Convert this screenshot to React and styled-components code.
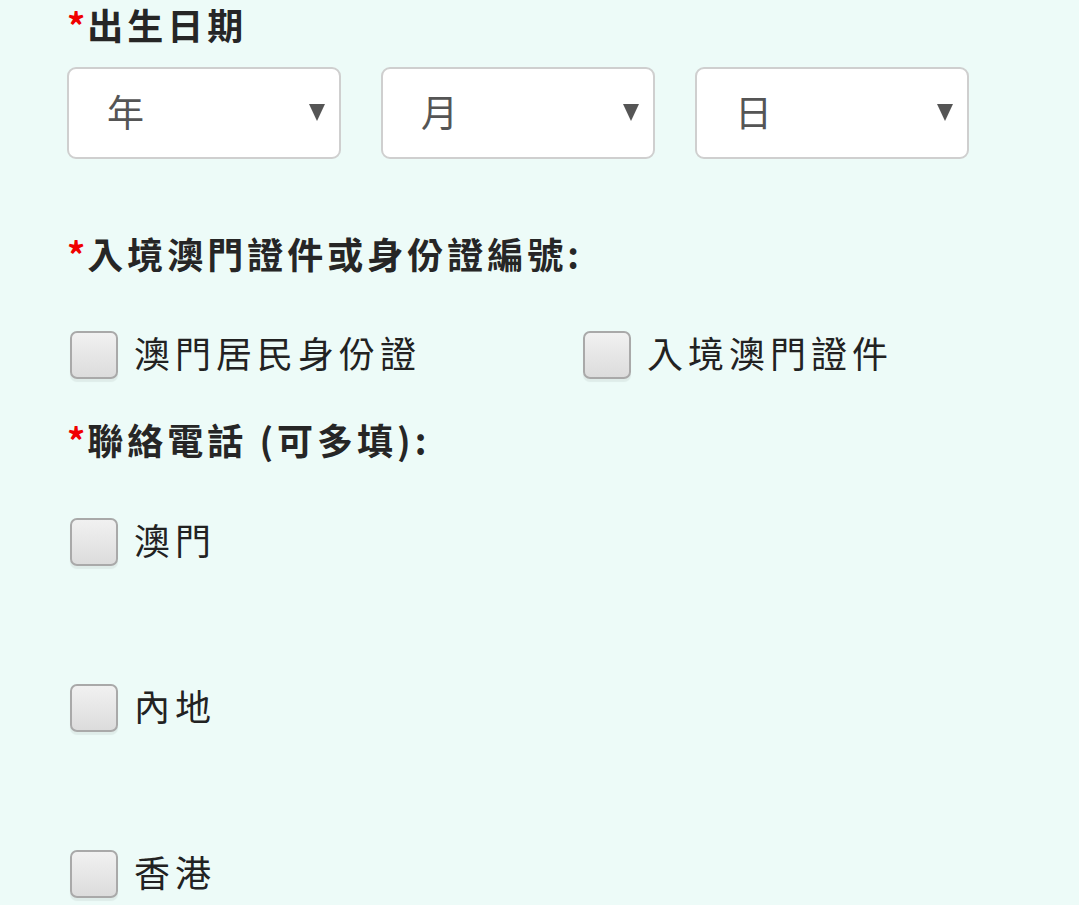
import React from "react";
import styled, { createGlobalStyle } from "styled-components";

const Global = createGlobalStyle`
  html, body { margin: 0; padding: 0; background: #edfbf8; }
  body { font-family: "Noto Sans CJK TC", "Noto Sans", sans-serif; color: #222; }
`;

const Page = styled.div`
  padding: 0 0 0 67px;
  min-height: 905px;
  box-sizing: border-box;
`;

const Heading = styled.div`
  font-size: 36px;
  line-height: 48px;
  font-weight: 700;
  letter-spacing: 4px;
  color: #262626;
  margin-top: ${(p) => p.$mt || 0}px;
  white-space: nowrap;
`;

const Star = styled.span`
  color: #f00000;
  letter-spacing: 0;
  margin-right: 2px;
`;

const SelectRow = styled.div`
  display: flex;
  gap: 40px;
  margin-top: 19px;
`;

const SelectBox = styled.div`
  width: 274px;
  height: 92px;
  box-sizing: border-box;
  border: 2px solid #cfcfcf;
  border-radius: 9px;
  background: #fff;
  display: flex;
  align-items: center;
  justify-content: space-between;
  padding: 0 14px 4px 38px;
  font-size: 37px;
  color: #555;
`;

const Arrow = styled.span`
  width: 0;
  height: 0;
  border-left: 8px solid transparent;
  border-right: 8px solid transparent;
  border-top: 17px solid #555;
  margin-top: 2px;
`;

const CheckRow = styled.div`
  display: grid;
  grid-template-columns: ${(p) => p.$cols || "1fr"};
  margin-top: ${(p) => p.$mt || 0}px;
`;

const CheckItem = styled.label`
  display: flex;
  align-items: center;
  height: 48px;
  padding-left: 3px;
  font-size: 36px;
  letter-spacing: 5px;
  color: #222;
  white-space: nowrap;
`;

const LabelText = styled.span`
  padding-bottom: 6px;
`;

const Box = styled.span`
  width: 48px;
  height: 48px;
  box-sizing: border-box;
  border: 2px solid #a9a9a9;
  border-radius: 7px;
  background: linear-gradient(#f1f1f1, #dcdcdc);
  box-shadow: 0 3px 1px rgba(0, 0, 0, 0.06);
  margin-right: 16px;
  flex: none;
`;

const PhoneList = styled.div`
  display: flex;
  flex-direction: column;
  gap: 118px;
  margin-top: 55px;
`;

const Check = ({ children }) => (
  <CheckItem>
    <Box />
    <LabelText>{children}</LabelText>
  </CheckItem>
);

export default function App() {
  return (
    <>
      <Global />
      <Page>
        <Heading>
          <Star>*</Star>出生日期
        </Heading>
        <SelectRow>
          {["年", "月", "日"].map((t) => (
            <SelectBox key={t}>
              {t}
              <Arrow />
            </SelectBox>
          ))}
        </SelectRow>
        <Heading $mt={70}>
          <Star>*</Star>入境澳門證件或身份證編號:
        </Heading>
        <CheckRow $cols="513px 1fr" $mt={54}>
          <Check>澳門居民身份證</Check>
          <Check>入境澳門證件</Check>
        </CheckRow>
        <Heading $mt={36}>
          <Star>*</Star>聯絡電話 (可多填):
        </Heading>
        <PhoneList>
          <Check>澳門</Check>
          <Check>內地</Check>
          <Check>香港</Check>
        </PhoneList>
      </Page>
    </>
  );
}
